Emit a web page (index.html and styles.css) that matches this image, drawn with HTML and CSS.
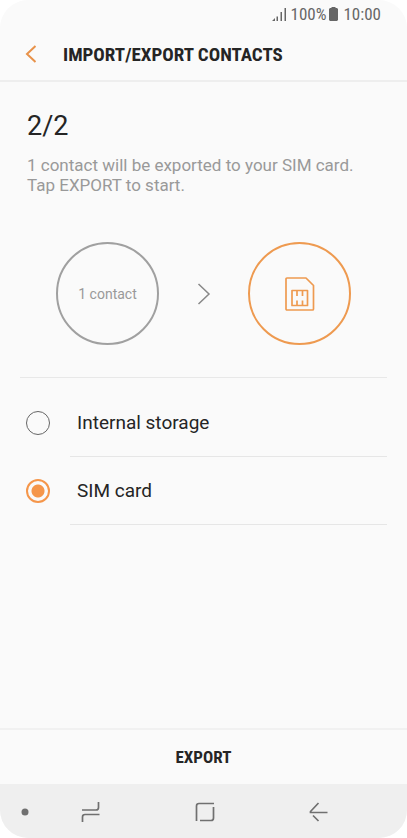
FILE: index.html
```html
<!DOCTYPE html>
<html lang="en">
<head>
<meta charset="utf-8">
<meta name="viewport" content="width=device-width, initial-scale=1">
<title>Import/Export contacts</title>
<link rel="stylesheet" href="styles.css">
</head>
<body>
<div class="screen">
  <div class="status">
    <svg class="signal" width="14" height="14" viewBox="0 0 14 14" aria-hidden="true"><path d="M0 14L3 11V14ZM4.500 9.500H6V14H4.500ZM8.500 5H10V14H8.500ZM12.500 1H14V14H12.500Z"/></svg>
    <span>100%</span>
    <svg class="battery" width="9" height="14" viewBox="0 0 9 14" aria-hidden="true"><path d="M2.500 0H6.500V1H8L9 2V13L8 14H1L0 13V2L1 1H2.500Z"/></svg>
    <span>10:00</span>
  </div>
  <header class="bar">
    <button class="back" type="button" aria-label="Back">
      <svg width="12" height="18" viewBox="0 0 12 18" aria-hidden="true"><path d="M10.500 1L2 9L10.500 17"/></svg>
    </button>
    <h1>IMPORT/EXPORT CONTACTS</h1>
  </header>
  <main>
    <section class="intro">
      <h2>2/2</h2>
      <p>1 contact will be exported to your SIM card. Tap EXPORT to start.</p>
    </section>
    <section class="transfer">
      <div class="circle">1 contact</div>
      <svg class="arrow" width="14" height="22" viewBox="0 0 14 22" stroke-width="1.500" aria-hidden="true"><path d="M1.500 1L12 11L1.500 21"/></svg>
      <div class="circle target">
        <svg width="30" height="34" viewBox="0 0 30 34" stroke-width="1.700" stroke-linejoin="round" aria-label="SIM card" role="img"><path d="M2 1H21L28.500 8.500V32Q28.500 33 27.500 33H2Q1 33 1 32V2Q1 1 2 1ZM7 13.500H22.500V28.500H7ZM12 14V19M17.500 14V19M12 28.500V23.500M17.500 28.500V23.500"/></svg>
      </div>
    </section>
    <form class="options">
      <label class="option"><input type="radio" name="target"><span>Internal storage</span></label>
      <label class="option"><input type="radio" name="target" checked><span>SIM card</span></label>
    </form>
  </main>
  <button class="export" type="button">EXPORT</button>
  <nav class="nav">
    <button type="button" aria-label="Hide navigation bar"><svg width="8" height="8" viewBox="0 0 8 8"><circle class="dot" cx="4" cy="4" r="3.500"/></svg></button>
    <button type="button" aria-label="Recents"><svg width="20" height="22" viewBox="0 0 20 22" stroke-width="1.700"><path d="M1 9H15Q17.500 9 17.500 6.500V1M18.500 13.500H4Q1.500 13.500 1.500 16V21"/></svg></button>
    <button type="button" aria-label="Home"><svg width="20" height="20" viewBox="0 0 20 20" stroke-width="1.700"><path d="M1.500 19V4Q1.500 1.500 4 1.500H19M18.500 5V16Q18.500 18.500 16 18.500H5"/></svg></button>
    <button type="button" aria-label="Back"><svg width="20" height="20" viewBox="0 0 20 20" stroke-width="1.700"><path d="M9.500 1L1.500 9.500V10.500H18.500M4 13.500L9.500 19"/></svg></button>
  </nav>
</div>
</body>
</html>
```
FILE: styles.css
```css
* { box-sizing: border-box; }

body {
  margin: 0;
  background: #fff;
  color: #252525;
  font-family: Roboto, sans-serif;
}

h1, h2, p { margin: 0; font-weight: 400; }

button {
  padding: 0;
  border: 0;
  background: none;
  color: inherit;
}

svg {
  display: block;
  fill: none;
  stroke: currentColor;
}

.screen {
  display: flex;
  flex-direction: column;
  min-height: 100vh;
  border-radius: 28px;
  background: #fafafa;
  overflow: hidden;
}

.status {
  display: flex;
  justify-content: flex-end;
  align-items: center;
  height: 28px;
  padding-right: 26px;
  color: #666;
  font-family: "Roboto Condensed", Roboto, sans-serif;
  font-size: 17px;
}

.status svg { fill: currentColor; stroke: none; }
.signal { margin-right: 5px; }
.battery { margin: 0 5px 0 3px; }

.bar {
  display: flex;
  align-items: center;
  height: 54px;
  padding-left: 25px;
  border-bottom: 2px solid #eee;
}

.back {
  width: 38px;
  color: #e8924a;
}

.back svg { stroke-width: 2; }

.bar h1 {
  font-family: "Roboto Condensed", Roboto, sans-serif;
  font-size: 19px;
  font-weight: 700;
}

.intro { padding: 28px 27px 0; }

.intro h2 {
  font-size: 27px;
  line-height: 32px;
}

.intro p {
  margin-top: 13px;
  color: #999;
  font-size: 17px;
  line-height: 20px;
}

.transfer {
  display: flex;
  justify-content: space-between;
  align-items: center;
  margin: 0 20px;
  padding: 47px 36px 32px;
  border-bottom: 1px solid #e8e8e8;
}

.circle {
  display: grid;
  place-items: center;
  width: 103px;
  height: 103px;
  border: 2px solid #a0a0a0;
  border-radius: 50%;
  color: #999;
  font-size: 14px;
}

.target {
  border-color: #ee9a50;
  color: #ee9a50;
}

.arrow { color: #888; }

.options { padding: 11px 20px 0 26px; }

.option {
  display: flex;
  align-items: center;
  gap: 20px;
}

.option input {
  appearance: none;
  width: 24px;
  height: 24px;
  margin: 0;
  border: 1px solid #666;
  border-radius: 50%;
}

.option input:checked {
  border: 2px solid #f5964a;
  background: radial-gradient(circle, #f5964a 6px, transparent 7px);
}

.option span {
  flex: 1;
  padding-left: 7px;
  border-bottom: 1px solid #e6e6e6;
  font-size: 19px;
  line-height: 67px;
}

.export {
  height: 56px;
  margin-top: auto;
  border-top: 2px solid #f1f1f1;
  font-family: "Roboto Condensed", Roboto, sans-serif;
  font-size: 17px;
  font-weight: 700;
}

.nav {
  display: grid;
  grid-template-columns: 50fr 82fr 146fr 82fr 47fr;
  align-items: center;
  height: 54px;
  padding-top: 2px;
  background: #efefef;
  color: #707070;
}

.nav button { display: grid; place-items: center; }
.dot { fill: currentColor; stroke: none; }
```
